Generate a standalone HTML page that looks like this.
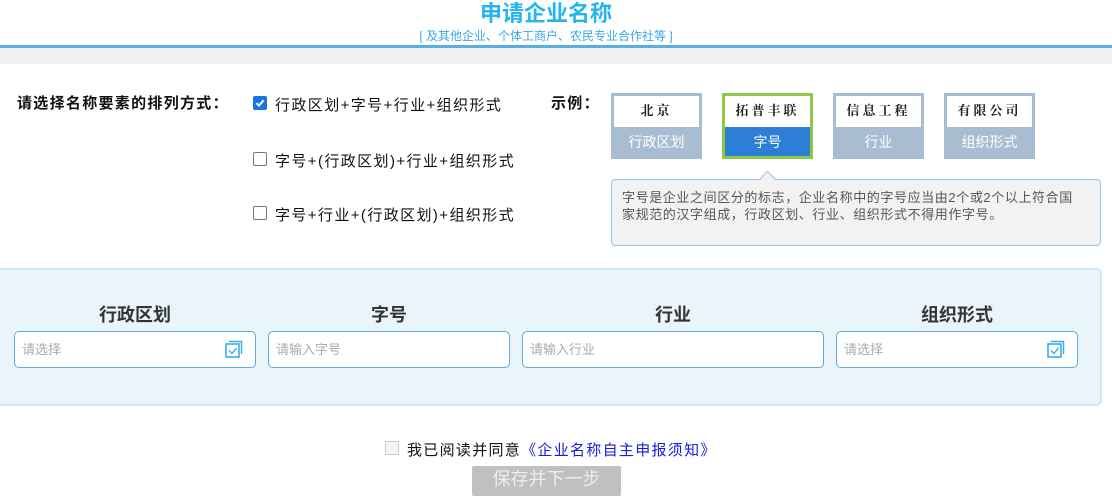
<!DOCTYPE html>
<html><head><meta charset="utf-8"><style>
*{margin:0;padding:0;box-sizing:border-box}
body{width:1112px;height:484px;overflow:hidden;background:#fff;font-family:"Liberation Sans","Noto Sans CJK SC",sans-serif;position:relative;color:#222}
.a{position:absolute}
.title{left:0;width:1092px;top:-4px;text-align:center;font-size:22px;font-weight:bold;color:#22b5ee}
.sub{left:0;width:1092px;top:27px;text-align:center;font-size:12px;color:#38a8e8}
.cb{width:14px;height:14px;border:1px solid #777;border-radius:2px;background:#fff}
.cb.on{background:#1a73e8;border-color:#1a73e8}
.opt{font-size:15px;color:#111;letter-spacing:1.4px}
.card{width:91px;height:66px;border:3px solid #a8bdd2;background:#fff}
.card .t{height:31px;text-align:center;font-family:"Liberation Serif","Noto Serif CJK SC",serif;font-weight:bold;font-size:13px;line-height:30px;letter-spacing:3px}
.card .b{height:29px;background:#a8bdd2;color:#fff;text-align:center;font-size:14px;line-height:30px}
.lab{font-size:18px;font-weight:bold;color:#333;text-align:center}
.inp{height:37px;border:1px solid #5fa9dc;border-radius:5px;background:#fff;font-size:13px;color:#aaa;line-height:35px;padding-left:7px}
</style></head><body>
<div class="a title">申请企业名称</div>
<div class="a sub">[ 及其他企业、个体工商户、农民专业合作社等 ]</div>
<div class="a" style="left:0;top:45px;width:1112px;height:3px;background:#5aaee0"></div>
<div class="a" style="left:0;top:48px;width:1112px;height:16px;background:#f1f1f1"></div>

<div class="a" style="left:17px;top:92px;font-size:15px;font-weight:bold;color:#111;letter-spacing:1.3px">请选择名称要素的排列方式：</div>
<div class="a cb on" style="left:253px;top:96px"><svg width="12" height="12" viewBox="0 0 12 12" style="display:block"><path d="M2.5 6.2 L5 8.6 L9.6 3.2" stroke="#fff" stroke-width="2" fill="none"/></svg></div>
<div class="a opt" style="left:275px;top:94px">行政区划+字号+行业+组织形式</div>
<div class="a cb" style="left:253px;top:152px"></div>
<div class="a opt" style="left:275px;top:150px">字号+(行政区划)+行业+组织形式</div>
<div class="a cb" style="left:253px;top:206px"></div>
<div class="a opt" style="left:275px;top:204px">字号+行业+(行政区划)+组织形式</div>

<div class="a" style="left:551px;top:92px;font-size:15px;font-weight:bold;color:#111;letter-spacing:1.3px">示例：</div>
<div class="a card" style="left:611px;top:93px"><div class="t">北京</div><div class="b">行政区划</div></div>
<div class="a card" style="left:722px;top:93px;border-color:#8cc84b"><div class="t">拓普丰联</div><div class="b" style="background:#2c7fd4">字号</div></div>
<div class="a card" style="left:833px;top:93px"><div class="t">信息工程</div><div class="b">行业</div></div>
<div class="a card" style="left:944px;top:93px"><div class="t">有限公司</div><div class="b">组织形式</div></div>

<div class="a" style="left:611px;top:179px;width:490px;height:67px;border:1px solid #9cc2e5;border-radius:4px;background:#f2f2f2;padding:9px 8px 9px 10px;font-size:13px;line-height:17px;color:#555;letter-spacing:0.6px">字号是企业之间区分的标志，企业名称中的字号应当由2个或2个以上符合国<br>家规范的汉字组成，行政区划、行业、组织形式不得用作字号。</div>
<div class="a" style="left:762px;top:173px;width:11px;height:11px;background:#f2f2f2;border-left:1px solid #9cc2e5;border-top:1px solid #9cc2e5;transform:rotate(45deg)"></div>

<div class="a" style="left:-6px;top:268px;width:1108px;height:138px;background:#e9f5fb;border:2px solid #cdeaf8;border-radius:6px"></div>
<div class="a lab" style="left:14px;width:242px;top:301px">行政区划</div>
<div class="a lab" style="left:268px;width:242px;top:301px">字号</div>
<div class="a lab" style="left:522px;width:302px;top:301px">行业</div>
<div class="a lab" style="left:836px;width:242px;top:301px">组织形式</div>
<div class="a inp" style="left:14px;top:331px;width:242px">请选择</div>
<div class="a inp" style="left:268px;top:331px;width:242px">请输入字号</div>
<div class="a inp" style="left:522px;top:331px;width:302px">请输入行业</div>
<div class="a inp" style="left:836px;top:331px;width:242px">请选择</div>
<svg class="a" style="left:225px;top:340px" width="18" height="18" viewBox="0 0 18 18"><path d="M4 1.5H16.5V14" stroke="#3ab0e6" stroke-width="1.5" fill="none"/><rect x="1" y="4" width="13" height="13" fill="#fff" stroke="#3ab0e6" stroke-width="1.6"/><path d="M4 10.5L7 13.5L11.5 8" stroke="#3ab0e6" stroke-width="1.4" fill="none"/></svg>
<svg class="a" style="left:1047px;top:340px" width="18" height="18" viewBox="0 0 18 18"><path d="M4 1.5H16.5V14" stroke="#3ab0e6" stroke-width="1.5" fill="none"/><rect x="1" y="4" width="13" height="13" fill="#fff" stroke="#3ab0e6" stroke-width="1.6"/><path d="M4 10.5L7 13.5L11.5 8" stroke="#3ab0e6" stroke-width="1.4" fill="none"/></svg>

<div class="a cb" style="left:385px;top:441px;border-color:#ccc;background:#f4f4f4"></div>
<div class="a" style="left:407px;top:439px;font-size:15px;color:#111;letter-spacing:1.3px">我已阅读并同意<span style="color:#1a1adc">《企业名称自主申报须知》</span></div>
<div class="a" style="left:472px;top:466px;width:149px;height:30px;background:#c0c0c0;border-radius:2px;color:#eee;font-size:18px;text-align:center;line-height:26px">保存并下一步</div>
</body></html>
